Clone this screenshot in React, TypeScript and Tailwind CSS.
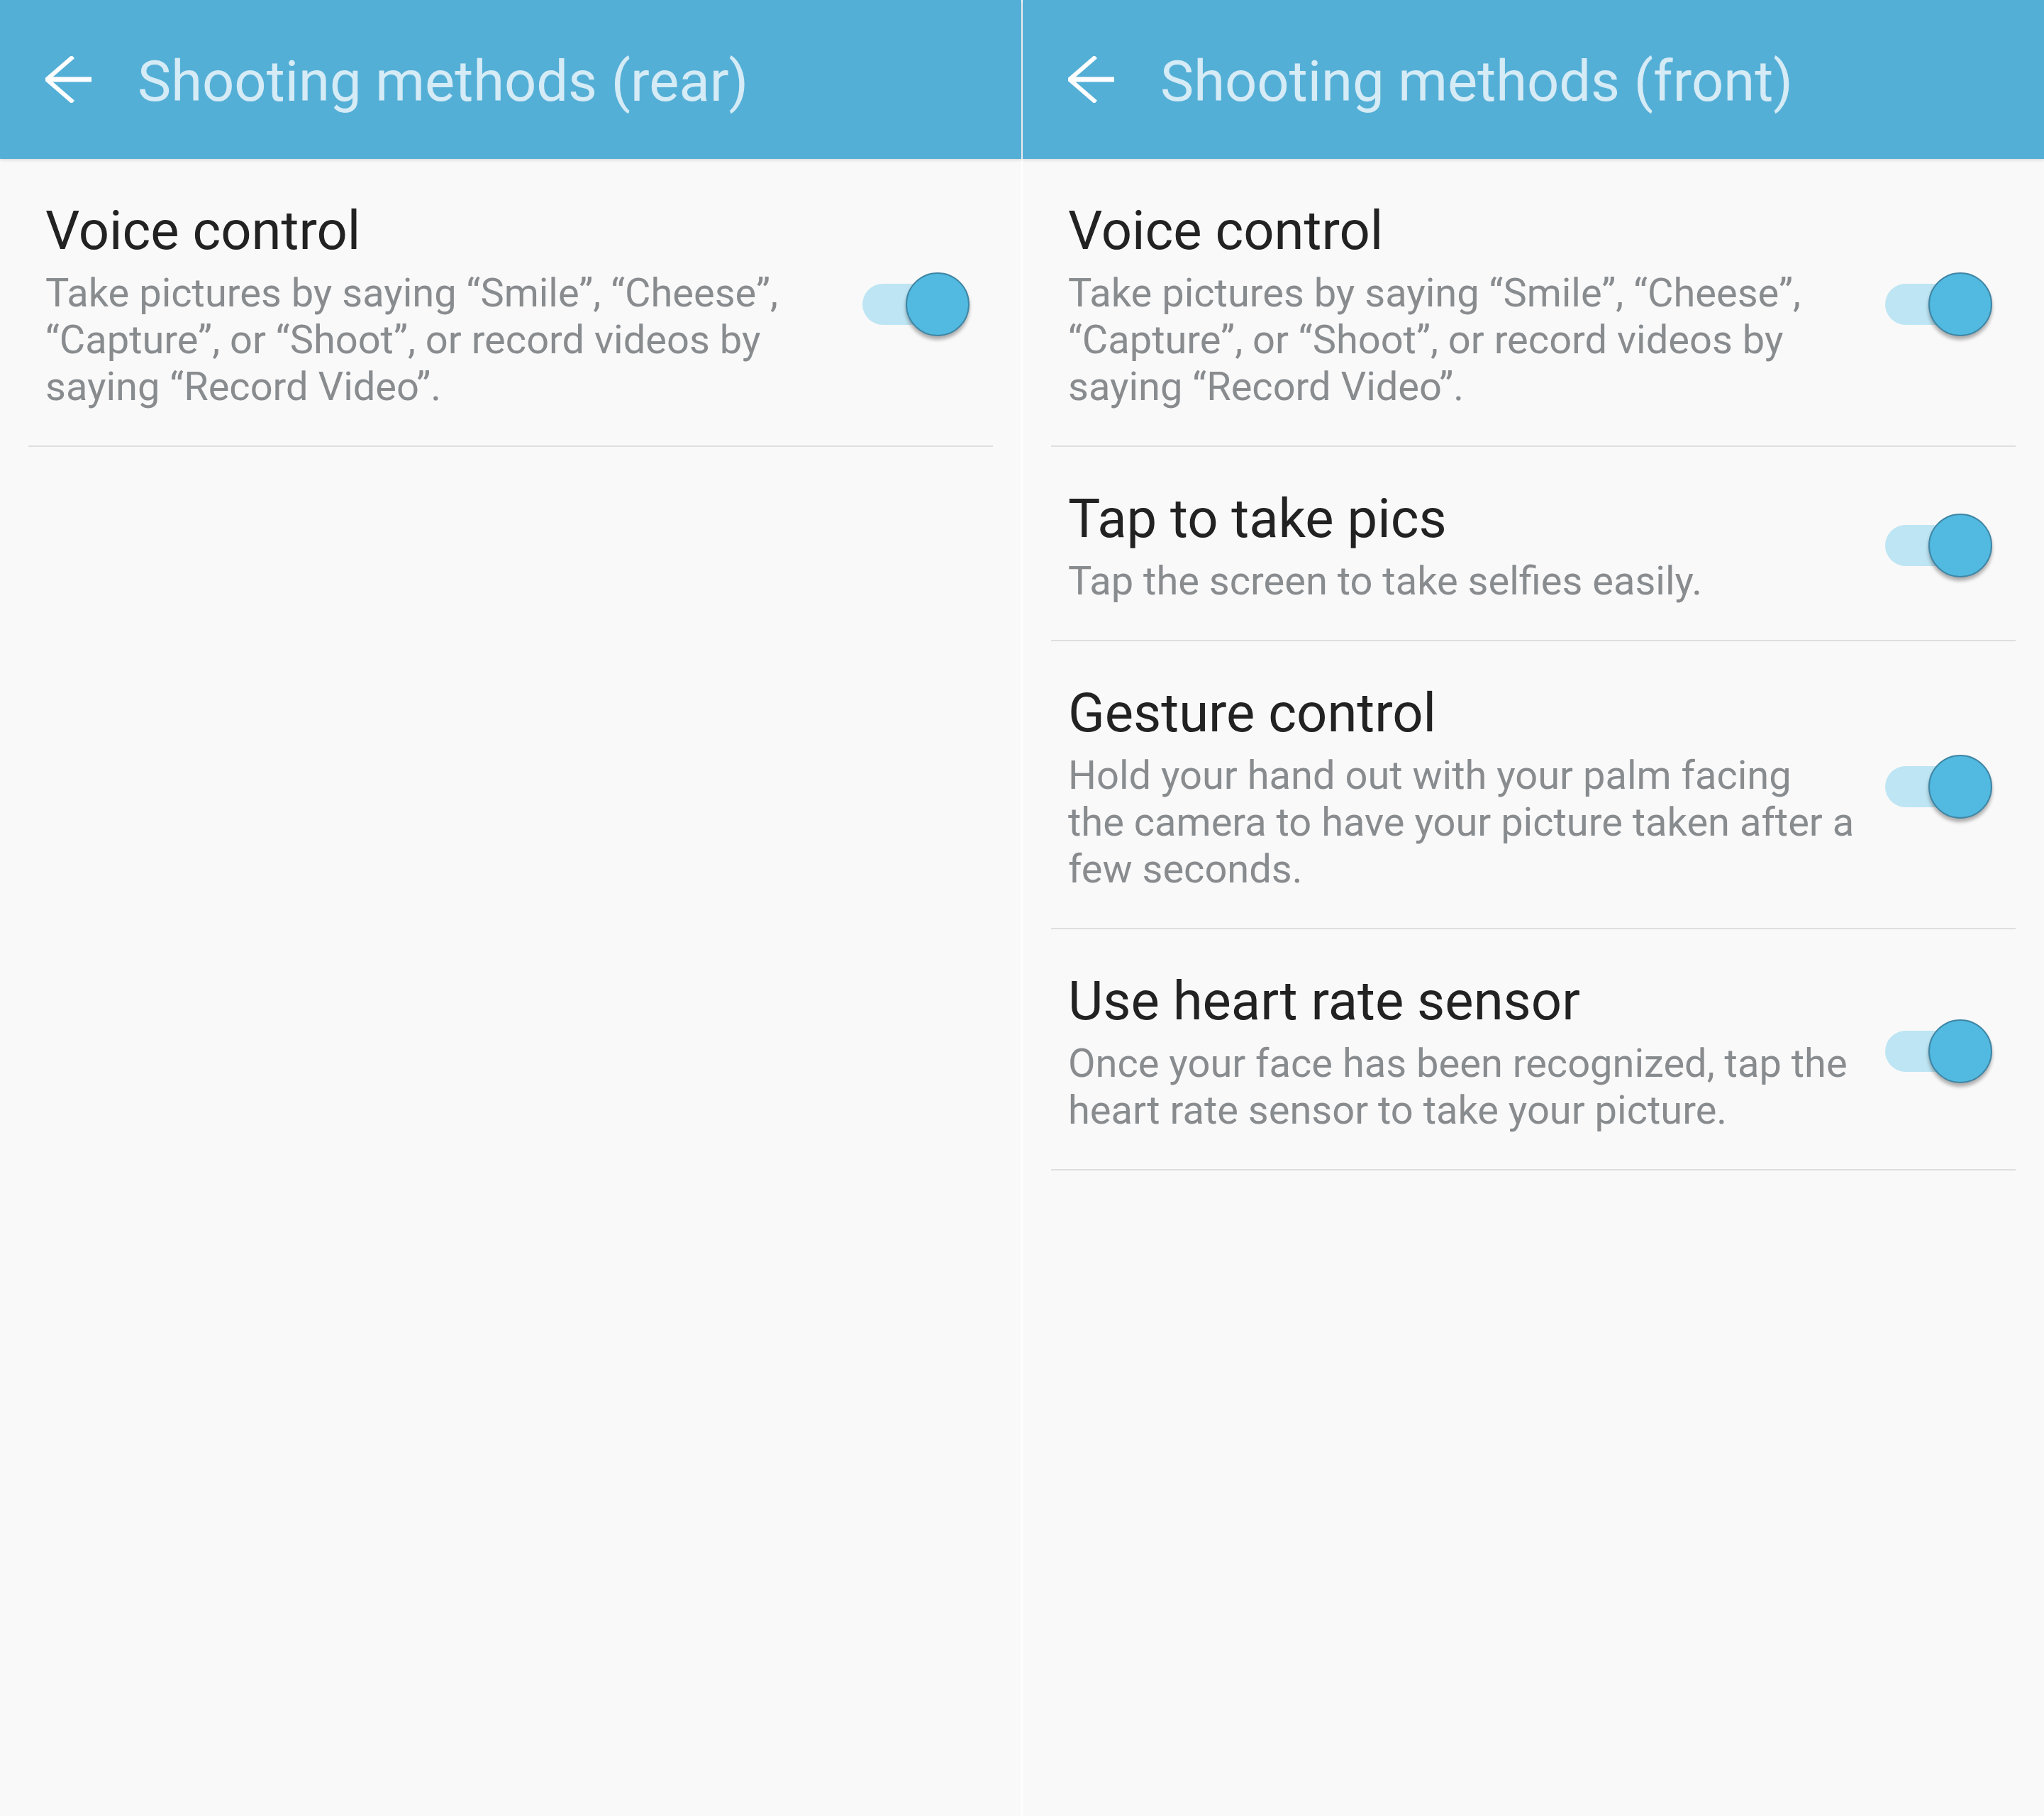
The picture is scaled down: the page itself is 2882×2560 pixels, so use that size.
import React from 'react'

interface Setting {
  title: string
  desc: string
}

const rear: Setting[] = [
  {
    title: 'Voice control',
    desc: 'Take pictures by saying \u201cSmile\u201d, \u201cCheese\u201d, \u201cCapture\u201d, or \u201cShoot\u201d, or record videos by saying \u201cRecord Video\u201d.',
  },
]

const front: Setting[] = [
  rear[0],
  { title: 'Tap to take pics', desc: 'Tap the screen to take selfies easily.' },
  {
    title: 'Gesture control',
    desc: 'Hold your hand out with your palm facing the camera to have your picture taken after a few seconds.',
  },
  {
    title: 'Use heart rate sensor',
    desc: 'Once your face has been recognized, tap the heart rate sensor to take your picture.',
  },
]

function BackArrow() {
  return (
    <svg width="66" height="66" viewBox="0 0 66 66" fill="none" className="ml-[64px] shrink-0">
      <path d="M39 1 L2 33 L39 65" stroke="#fff" strokeWidth="6" strokeLinejoin="miter" />
      <path d="M2 33 H65" stroke="#fff" strokeWidth="7" />
    </svg>
  )
}

function Toggle() {
  return (
    <div className="relative w-[151px] h-[90px] shrink-0">
      {/* track */}
      <div className="absolute left-0 top-[16px] w-[120px] h-[58px] rounded-full bg-[#BEE5F3]" />
      {/* thumb */}
      <div className="absolute right-0 top-0 w-[90px] h-[90px] rounded-full bg-[#52BAE0] border-2 border-[#3F86A6] shadow-[0_5px_5px_rgba(0,0,0,0.3)]" />
    </div>
  )
}

function Row({ item }: { item: Setting }) {
  return (
    <div className="flex items-center pl-[24px] pr-[33px] pt-[55px] pb-[50px] border-b-2 border-[#DEDEDE]">
      <div className="w-[1111px]">
        <div className="text-[76px] leading-[92px] text-[#222222]">{item.title}</div>
        <div className="mt-[9px] text-[56px] leading-[66px] text-[#898C8F]">{item.desc}</div>
      </div>
      <div className="ml-auto">
        <Toggle />
      </div>
    </div>
  )
}

function Panel({ title, items }: { title: string; items: Setting[] }) {
  return (
    <div className="w-[1440px] h-full flex flex-col bg-[#F9F9F9]">
      <div className="h-[224px] shrink-0 flex items-center bg-[#54AFD6] shadow-[0_2px_4px_rgba(0,0,0,0.12)] relative z-10">
        <BackArrow />
        <span className="ml-[64px] pt-[6px] text-[79.5px] leading-none text-[#D5EBF6]">{title}</span>
      </div>
      <div className="px-[40px]">
        {items.map((it) => (
          <Row key={it.title} item={it} />
        ))}
      </div>
    </div>
  )
}

export default function App() {
  return (
    <div
      className="flex w-[2882px] h-[2560px] bg-[#F9F9F9]"
      style={{ fontFamily: 'Roboto, "Noto Sans", sans-serif' }}
    >
      <Panel title="Shooting methods (rear)" items={rear} />
      <div className="w-[2px] h-full bg-white shrink-0" />
      <Panel title="Shooting methods (front)" items={front} />
    </div>
  )
}
